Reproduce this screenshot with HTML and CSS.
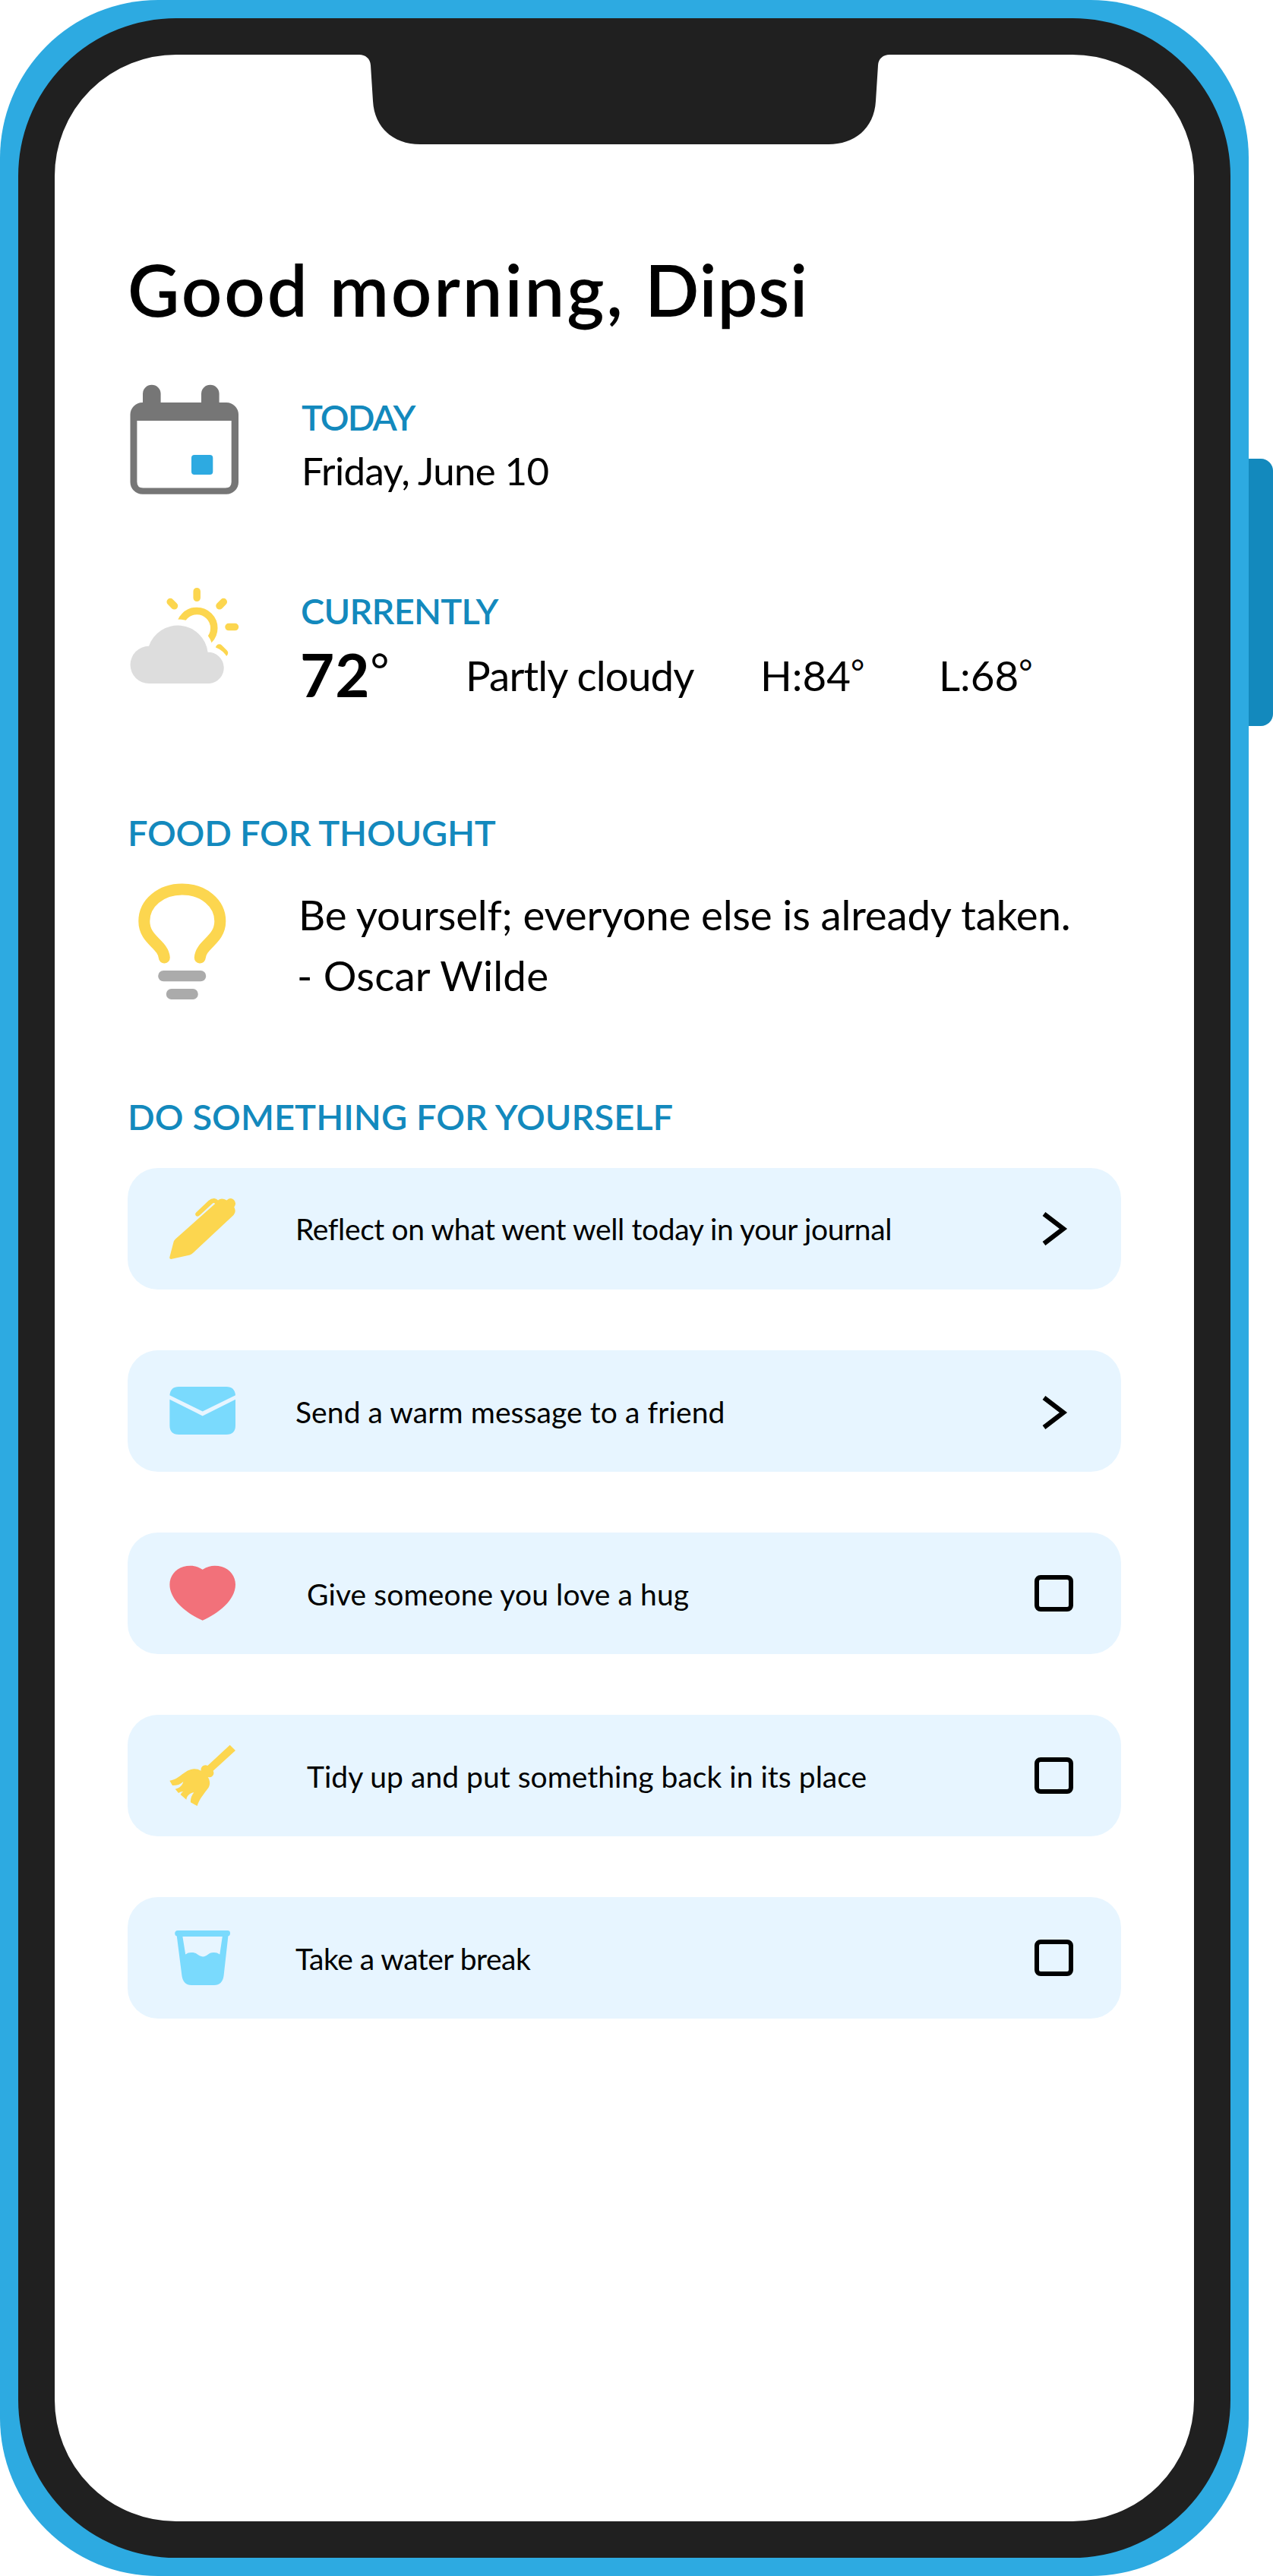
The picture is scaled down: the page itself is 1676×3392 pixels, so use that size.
FILE: index.html
```html
<!DOCTYPE html>
<html lang="en">
<head>
<meta charset="utf-8">
<title>Good morning</title>
<link rel="stylesheet" href="styles.css">
</head>
<body>
<div class="phone">
  <span class="side-button"></span>
  <svg class="notch" viewBox="472 70 700 120" aria-hidden="true"><path fill="#202020" d="M472 70V72H473C481 72 487.500 77 488 86L491 133C493 170 520 190 553 190H1091C1124 190 1151 170 1153 133L1156 86C1156.500 77 1163 72 1171 72H1172V70Z"/></svg>
  <main class="screen">
    <h1 class="greeting">Good morning, <span class="name">Dipsi</span></h1>

    <section class="info today">
      <svg class="info-icon" width="150" height="148" viewBox="168 506 150 148" aria-hidden="true">
        <g fill="#767676"><rect x="188" y="506.700" width="23.600" height="48" rx="11.800"/><rect x="265" y="506.700" width="23.600" height="48" rx="11.800"/><rect x="171.500" y="530" width="142.500" height="120.700" rx="16"/></g>
        <path fill="#fff" d="M180.400 554H304.700V634.500Q304.700 642.500 296.700 642.500H188.400Q180.400 642.500 180.400 634.500Z"/>
        <rect fill="#2daae1" x="252" y="599" width="28.300" height="26" rx="4"/>
      </svg>
      <div>
        <h2 class="label today-label">TODAY</h2>
        <p class="date">Friday, June 10</p>
      </div>
    </section>

    <section class="info weather">
      <svg class="info-icon" width="150" height="134" viewBox="168 770 150 134" aria-hidden="true">
        <g fill="none" stroke="#fcd64f" stroke-width="9.500" stroke-linecap="round">
          <circle cx="259.200" cy="827" r="22.600"/>
          <path d="M259.200 778.700V787.300M224.200 792.500L229.500 797.800M294.300 792.500L289 797.800M301 825.600H309.500M288.700 853L295.500 859.800"/>
        </g>
        <path fill="#ddd" stroke="#fff" stroke-width="16" paint-order="stroke" d="M196 850.800A40 40 0 0 1 273.600 858.700A20.700 20.700 0 0 1 276 900H196.300A24.600 24.600 0 0 1 196 850.800Z"/>
      </svg>
      <div>
        <h2 class="label current-label">CURRENTLY</h2>
        <div class="readings">
          <p class="temp">72<span class="deg">°</span></p>
          <p class="reading sky">Partly cloudy</p>
          <p class="reading">H:84<span class="deg">°</span></p>
          <p class="reading">L:68<span class="deg">°</span></p>
        </div>
      </div>
    </section>

    <h2 class="label food-label">FOOD FOR THOUGHT</h2>
    <section class="info thought">
      <svg class="info-icon" width="150" height="160" viewBox="168 1160 150 160" aria-hidden="true">
        <path fill="none" stroke="#fcd64f" stroke-width="15" stroke-linecap="round" d="M216.300 1261C215 1243 189.800 1238 189.800 1213C189.800 1189 212 1171 239.800 1171C267.600 1171 289.800 1189 289.800 1213C289.800 1238 264.600 1243 263.300 1261"/>
        <g fill="#ababab"><rect x="208.200" y="1278" width="63" height="14.300" rx="7.100"/><rect x="218.800" y="1302" width="42" height="14" rx="7"/></g>
      </svg>
      <div class="quote">
        <p class="saying">Be yourself; everyone else is already taken.</p>
        <p class="author">- Oscar Wilde</p>
      </div>
    </section>

    <h2 class="label tasks-label">DO SOMETHING FOR YOURSELF</h2>
    <ul class="tasks">
      <li class="task">
        <svg class="task-icon" width="90" height="90" viewBox="222 1573 90 90" aria-hidden="true"><path fill="#fcd64f" d="M223.300 1655.500L228.500 1635.500Q229 1633.500 231 1631.500L283.200 1585Q281.500 1583.200 279.500 1585L263.200 1600Q260.500 1603 258 1601Q256 1598.500 258.500 1596.200L274.500 1581Q278 1577.800 282 1578Q285 1578 287 1580.500Q291.500 1576.700 298.500 1580.500Q303.500 1576 308 1580Q312 1584.500 308.300 1589.500Q311.500 1595.500 307.500 1600L254.500 1649.500Q252.500 1651.700 250 1652.500L226.300 1657.800Q222.800 1658.300 223.300 1655.500Z"/></svg>
        <span class="task-text t-journal">Reflect on what went well today in your journal</span>
        <svg class="chevron" width="60" height="60" viewBox="0 0 60 60" aria-hidden="true"><path d="M17.500 10.500L43 30L17.500 49.500"/></svg>
      </li>
      <li class="task">
        <svg class="task-icon" width="90" height="90" viewBox="222 1813 90 90" aria-hidden="true"><path fill="#7adafd" d="M223.400 1842.700L266.700 1864.400L310 1842.700V1877Q310 1889 298 1889H235.400Q223.400 1889 223.400 1877ZM235.400 1826H298Q309 1826 310 1837.300L266.700 1858.500L223.400 1837.300Q224.400 1826 235.400 1826Z"/></svg>
        <span class="task-text t-message">Send a warm message to a friend</span>
        <svg class="chevron low" width="60" height="60" viewBox="0 0 60 60" aria-hidden="true"><path d="M17.500 10.500L43 30L17.500 49.500"/></svg>
      </li>
      <li class="task">
        <svg class="task-icon" width="90" height="90" viewBox="222 2053 90 90" aria-hidden="true"><path fill="#f2717a" d="M266.700 2066.800C275 2061 284 2061 292 2063C303 2066 310 2076 310 2086.500C310 2107 287 2125 266.700 2133.700C246.400 2125 223.400 2107 223.400 2086.500C223.400 2076 230.400 2066 241.400 2063C249.400 2061 258.400 2061 266.700 2066.800Z"/></svg>
        <span class="task-text t-hug">Give someone you love a hug</span>
        <span class="checkbox"></span>
      </li>
      <li class="task">
        <svg class="task-icon" width="90" height="90" viewBox="18 9 270 270" aria-hidden="true"><path fill="#fcd64f" d="M260 23L282 45L194 125Q200 139 190 147Q184 153 173 150C182 163 183 180 175 193C158 216 140 236 131 264L105 250Q103 230 118 211C103 213 90 223 88 239L65 219Q68 212 76 207Q65 207 57 213L44 197C59 194 72 185 76 168C64 180 48 184 33 183L22 164C62 160 80 119 120 118Q134 118 146 125C143 111 157 98 172 105Z"/></svg>
        <span class="task-text t-tidy">Tidy up and put something back in its place</span>
        <span class="checkbox"></span>
      </li>
      <li class="task">
        <svg class="task-icon" width="90" height="90" viewBox="222 2533 90 90" aria-hidden="true"><path fill="#7adafd" fill-rule="evenodd" d="M234 2542H299.500A3.500 3.500 0 0 1 303 2545.500Q303 2549 300.400 2549.500L294.500 2602Q292.500 2614 282 2614H252Q241.500 2614 239.500 2602L232.800 2549.500Q230.200 2549 230.200 2545.500A3.500 3.500 0 0 1 234 2542ZM240.400 2550L244.200 2573.400Q248 2570.700 252.500 2571C260 2571 261 2576.400 267 2576.400C273 2576.400 274 2571 281 2571Q285.500 2570.700 289.300 2573.400L292.800 2550Z"/></svg>
        <span class="task-text t-water">Take a water break</span>
        <span class="checkbox"></span>
      </li>
    </ul>
  </main>
</div>
</body>
</html>
```
FILE: styles.css
```css
* { box-sizing: border-box; }
body { margin: 0; background: #fff; color: #000; font-family: Lato, "Open Sans", sans-serif; }
h1, h2, p, ul { margin: 0; padding: 0; font-weight: 400; }
svg { display: block; }

.phone {
  position: relative;
  width: 1644px;
  height: 3392px;
  padding: 24px;
  border-radius: 208px;
  background: #2daae1;
}
.side-button {
  position: absolute;
  left: 1644px;
  top: 604px;
  width: 32px;
  height: 352px;
  border-radius: 0 16px 16px 0;
  background: #1389bd;
}
.notch { position: absolute; left: 472px; top: 70px; z-index: 1; width: 700px; height: 120px; }
.screen {
  height: 100%;
  padding: 251px 96px 0;
  border: 48px solid #202020;
  border-radius: 208px;
  background: #fff;
}

.greeting { font-size: 94px; line-height: 116px; font-weight: 600; letter-spacing: 2.85px; white-space: nowrap; }
.name { letter-spacing: 0.7px; }

.info { display: grid; grid-template-columns: 228px 1fr; white-space: nowrap; }
.label { font-size: 47px; line-height: 60px; font-weight: 600; color: #1389bd; white-space: nowrap; }

.today { margin-top: 67px; height: 148px; grid-template-columns: 229px 1fr; }
.today-label { margin-top: 13px; letter-spacing: -1.9px; }
.date { margin-top: 5px; font-size: 51px; line-height: 72px; letter-spacing: -0.65px; }

.weather { margin-top: 116px; height: 166px; }
.current-label { margin-top: 4px; letter-spacing: -0.75px; }
.readings { display: grid; grid-template-columns: 217px 388px 235px auto; align-items: start; margin-top: 6px; }
.temp { margin-left: -1px; font-size: 78px; line-height: 96px; font-weight: 700; letter-spacing: 1px; }
.reading { margin-top: 16px; font-size: 54.7px; line-height: 66px; }
.sky { letter-spacing: -0.85px; }
.deg { font-size: 44px; line-height: 0; vertical-align: 9px; font-weight: 400; letter-spacing: 0; }
.temp .deg { font-size: 60px; vertical-align: 14px; }

.food-label { margin: 130px 0 0; letter-spacing: -0.25px; }
.thought { margin-top: 34px; height: 164px; grid-template-columns: 225px 1fr; }
.quote { padding-top: 4px; font-size: 54.7px; line-height: 80px; }
.saying { letter-spacing: -0.2px; }
.author { margin-left: -2px; letter-spacing: 0.2px; }

.tasks-label { margin: 116px 0 38px; letter-spacing: 0.04px; }
.tasks { display: flex; flex-direction: column; gap: 80px; list-style: none; }
.task {
  display: flex;
  align-items: center;
  height: 160px;
  padding: 0 59px 0 54px;
  border-radius: 40px;
  background: #e7f5ff;
}
.task-text { flex: 1; margin: 2px 0 0 77px; font-size: 39px; line-height: 48px; white-space: nowrap; }
.t-journal { margin-top: 0; letter-spacing: -0.38px; }
.t-message { letter-spacing: 0.08px; }
.t-hug { margin-left: 92px; letter-spacing: 0.1px; }
.t-tidy { margin-left: 92px; letter-spacing: 0.02px; }
.t-water { letter-spacing: -0.5px; }
.chevron path { fill: none; stroke: #000; stroke-width: 6.2px; stroke-miterlimit: 10; }
.chevron.low { margin-top: 4px; }
.checkbox { width: 51px; height: 48px; margin-right: 4.5px; border: 6px solid #000; border-radius: 8px; }
```
